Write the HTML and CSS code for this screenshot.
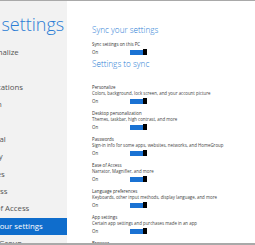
FILE: index.html
```html
<!DOCTYPE html>
<html lang="en">
<head>
    <meta charset="UTF-8">
    <meta name="viewport" content="width=device-width, initial-scale=1.0">
    <title>PC settings - Sync your settings</title>
    <link rel="stylesheet" href="styles.css">
</head>
<body>
    <div class="window">
        <div class="nav">
            <h1 class="nav-title">PC settings</h1>
            <ul class="nav-list">
                <li>Personalize</li>
                <li>Users</li>
                <li>Notifications</li>
                <li>Search</li>
                <li>Share</li>
                <li>General</li>
                <li>Privacy</li>
                <li>Devices</li>
                <li>Wireless</li>
                <li>Ease of Access</li>
                <li class="active">Sync your settings</li>
                <li>HomeGroup</li>
                <li>Windows Update</li>
            </ul>
        </div>

        <div class="content">
            <h2 class="section-title">Sync your settings</h2>
            <div class="setting first">
                <div class="setting-name">Sync settings on this PC</div>
                <div class="on-row">
                    <span class="on-label">On</span>
                    <span class="toggle"><span class="track"></span><span class="thumb"></span></span>
                </div>
            </div>

            <h2 class="section-title second">Settings to sync</h2>

            <div class="setting">
                <div class="setting-name">Personalize</div>
                <div class="setting-desc">Colors, background, lock screen, and your account picture</div>
                <div class="on-row">
                    <span class="on-label">On</span>
                    <span class="toggle"><span class="track"></span><span class="thumb"></span></span>
                </div>
            </div>
            <div class="setting">
                <div class="setting-name">Desktop personalization</div>
                <div class="setting-desc">Themes, taskbar, high contrast, and more</div>
                <div class="on-row">
                    <span class="on-label">On</span>
                    <span class="toggle"><span class="track"></span><span class="thumb"></span></span>
                </div>
            </div>
            <div class="setting">
                <div class="setting-name">Passwords</div>
                <div class="setting-desc">Sign-in info for some apps, websites, networks, and HomeGroup</div>
                <div class="on-row">
                    <span class="on-label">On</span>
                    <span class="toggle"><span class="track"></span><span class="thumb"></span></span>
                </div>
            </div>
            <div class="setting">
                <div class="setting-name">Ease of Access</div>
                <div class="setting-desc">Narrator, Magnifier, and more</div>
                <div class="on-row">
                    <span class="on-label">On</span>
                    <span class="toggle"><span class="track"></span><span class="thumb"></span></span>
                </div>
            </div>
            <div class="setting">
                <div class="setting-name">Language preferences</div>
                <div class="setting-desc">Keyboards, other input methods, display language, and more</div>
                <div class="on-row">
                    <span class="on-label">On</span>
                    <span class="toggle"><span class="track"></span><span class="thumb"></span></span>
                </div>
            </div>
            <div class="setting">
                <div class="setting-name">App settings</div>
                <div class="setting-desc">Certain app settings and purchases made in an app</div>
                <div class="on-row">
                    <span class="on-label">On</span>
                    <span class="toggle"><span class="track"></span><span class="thumb"></span></span>
                </div>
            </div>
            <div class="setting">
                <div class="setting-name">Browser</div>
                <div class="setting-desc">Favorites, history, and settings</div>
            </div>
        </div>
    </div>
</body>
</html>
```

FILE: styles.css
```css
* {
    margin: 0;
    padding: 0;
    box-sizing: border-box;
}

body {
    font-family: 'Open Sans', 'Noto Sans', sans-serif;
    background: white;
    width: 255px;
    height: 245px;
    overflow: hidden;
}

.window {
    height: 245px;
    display: flex;
    border-top: 1px solid #a9a9a9;
    border-bottom: 2px solid #a9a9a9;
    overflow: hidden;
}

/* Left navigation pane */
.nav {
    width: 67px;
    flex-shrink: 0;
    background: #f2f2f2;
    overflow: hidden;
    white-space: nowrap;
    padding-top: 12px;
}

.nav-title {
    font-size: 18px;
    font-weight: 300;
    line-height: 22px;
    color: #2b7dd5;
    text-indent: -25px;
}

.nav-list {
    list-style: none;
    margin-top: 8.8px;
}

.nav-list li {
    font-size: 7.8px;
    line-height: 17.4px;
    height: 17.4px;
    color: #555;
    text-indent: -23px;
}

.nav-list li.active {
    background: #0f6dcc;
    color: white;
}

/* Right content pane */
.content {
    flex: 1;
    padding: 24px 0 0 25px;
    white-space: nowrap;
    overflow: hidden;
}

.section-title {
    font-size: 8.2px;
    font-weight: 300;
    line-height: 10px;
    color: #2b7dd5;
}

.section-title.second {
    margin-top: 4px;
    margin-bottom: 15px;
}

.setting {
    margin-bottom: 6px;
    color: #333;
}

.setting.first {
    margin-top: 6px;
    margin-bottom: 0;
}

.setting-name,
.setting-desc {
    font-size: 4.4px;
    line-height: 6px;
    height: 6px;
}

.setting-desc {
    color: #444;
}

.on-row {
    display: flex;
    align-items: center;
    height: 6px;
    margin-top: 2px;
}

.on-label {
    width: 38px;
    font-size: 4.4px;
    line-height: 6px;
}

.toggle {
    display: flex;
    align-items: center;
}

.track {
    width: 13px;
    height: 5px;
    background: #1a72d3;
}

.thumb {
    width: 4px;
    height: 6px;
    background: #000;
}
```
